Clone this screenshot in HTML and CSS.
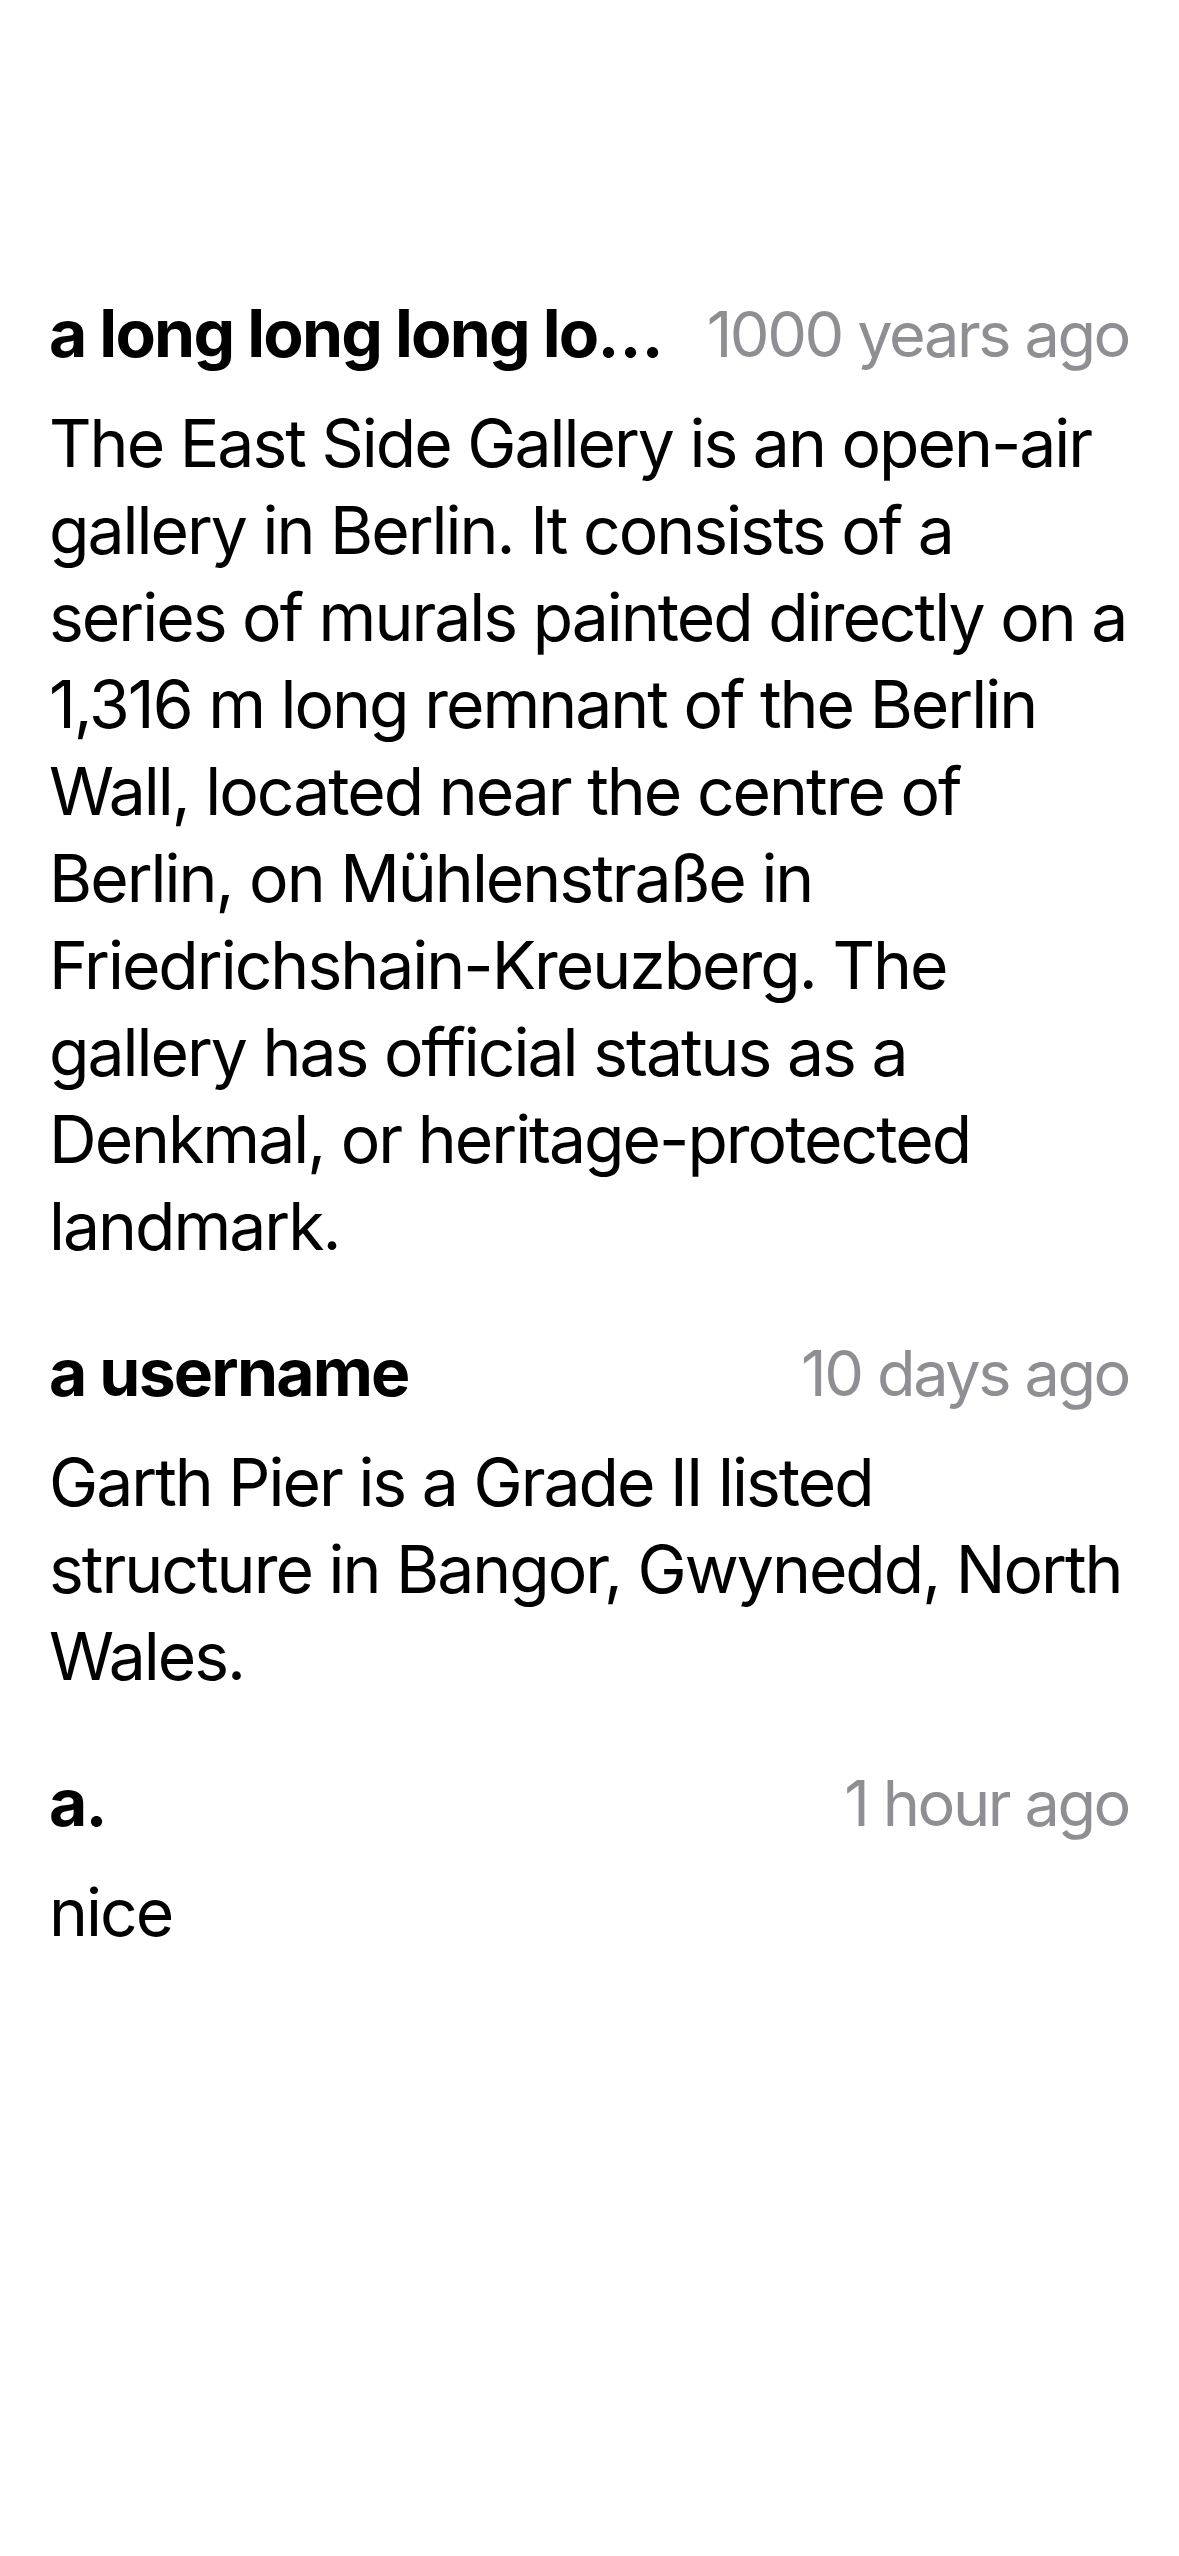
FILE: index.html
```html
<!DOCTYPE html>
<html lang="en">
<head>
<meta charset="utf-8">
<title>Comments</title>
<link rel="stylesheet" href="styles.css">
</head>
<body>
<main class="comments">
  <article class="comment">
    <header class="comment-head">
      <span class="author">a long long long lo…</span>
      <span class="time">1000 years ago</span>
    </header>
    <p class="body">The East Side Gallery is an open-air gallery in Berlin. It consists of a series of murals painted directly on a 1,316 m long remnant of the Berlin Wall, located near the centre of Berlin, on Mühlenstraße in Friedrichshain-Kreuzberg. The gallery has official status as a Denkmal, or heritage-protected landmark.</p>
  </article>
  <article class="comment">
    <header class="comment-head">
      <span class="author">a username</span>
      <span class="time">10 days ago</span>
    </header>
    <p class="body">Garth Pier is a Grade II listed structure in Bangor, Gwynedd, North Wales.</p>
  </article>
  <article class="comment">
    <header class="comment-head">
      <span class="author">a.</span>
      <span class="time">1 hour ago</span>
    </header>
    <p class="body">nice</p>
  </article>
</main>
</body>
</html>
```

FILE: styles.css
```css
html, body {
  margin: 0;
  padding: 0;
  background: #ffffff;
}

body {
  font-family: Inter, "Noto Sans", "Liberation Sans", sans-serif;
  color: #000000;
  width: 1179px;
  min-height: 2556px;
}

.comments {
  display: flex;
  flex-direction: column;
  gap: 59px;
  padding: 290px 50px 0 49px;
}

.comment {
  display: flex;
  flex-direction: column;
  gap: 22px;
}

.comment-head {
  display: flex;
  justify-content: space-between;
  align-items: baseline;
  gap: 40px;
  line-height: 87px;
}

.author {
  font-size: 66px;
  font-weight: 700;
  white-space: nowrap;
  letter-spacing: -1.8px;
}

.time {
  font-size: 63px;
  color: #8e8e93;
  white-space: nowrap;
  letter-spacing: -2.4px;
}

.body {
  margin: 0;
  font-size: 66px;
  line-height: 87px;
  letter-spacing: -2px;
}
```
